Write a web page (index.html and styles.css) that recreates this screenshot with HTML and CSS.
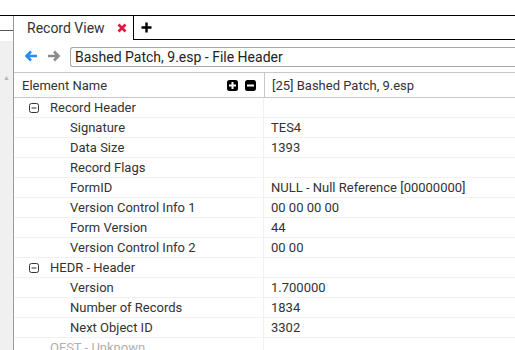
FILE: index.html
```html
<!DOCTYPE html>
<html lang="en">
<head>
    <meta charset="UTF-8">
    <title>Record View</title>
    <link rel="stylesheet" href="styles.css">
</head>
<body>
    <div class="topbar"></div>
    <div class="main">
        <div class="side">
            <div class="side-top"></div>
            <div class="side-gap"></div>
            <div class="scroll"><span class="scroll-up">&#9650;</span></div>
        </div>
        <div class="panel">
            <div class="tabs">
                <div class="tab">
                    <span class="tab-title">Record View</span>
                    <svg class="tab-close" width="10" height="10" viewBox="0 0 10 10">
                        <path d="M1.5 1.5 L8.5 8.5 M8.5 1.5 L1.5 8.5" stroke="#e3173e" stroke-width="2.6"/>
                    </svg>
                </div>
                <div class="tab-add">
                    <svg width="11" height="11" viewBox="0 0 11 11">
                        <path d="M5.5 0.5 V10.5 M0.5 5.5 H10.5" stroke="#000" stroke-width="2.4"/>
                    </svg>
                </div>
            </div>
            <div class="nav">
                <svg class="arrow" width="14" height="12" viewBox="0 0 14 12">
                    <path d="M13 6 H3 M7 1.5 L2.5 6 L7 10.5" stroke="#2b8cf0" stroke-width="2.6" fill="none"/>
                </svg>
                <svg class="arrow" width="14" height="12" viewBox="0 0 14 12">
                    <path d="M1 6 H11 M7 1.5 L11.5 6 L7 10.5" stroke="#8a8a8a" stroke-width="2.6" fill="none"/>
                </svg>
                <div class="address">Bashed Patch, 9.esp - File Header</div>
            </div>
            <div class="tree">
                <div class="row head">
                    <div class="cell name">
                        <span class="label">Element Name</span>
                        <span class="tools">
                            <svg width="11" height="11" viewBox="0 0 11 11">
                                <rect width="11" height="11" rx="2.5" fill="#000"/>
                                <path d="M5.5 2 V9 M2 5.5 H9" stroke="#fff" stroke-width="2"/>
                            </svg>
                            <svg width="11" height="11" viewBox="0 0 11 11">
                                <rect width="11" height="11" rx="2.5" fill="#000"/>
                                <path d="M2 5.5 H9" stroke="#fff" stroke-width="2"/>
                            </svg>
                        </span>
                    </div>
                    <div class="cell value">[25] Bashed Patch, 9.esp</div>
                </div>

                <div class="row">
                    <div class="cell name group">
                        <svg class="toggle" width="10" height="10" viewBox="0 0 10 10">
                            <rect x="0.5" y="0.5" width="9" height="9" rx="2" fill="none" stroke="#333"/>
                            <path d="M2.5 5 H7.5" stroke="#333"/>
                        </svg>
                        Record Header
                    </div>
                    <div class="cell value"></div>
                </div>
                <div class="row"><div class="cell name child">Signature</div><div class="cell value">TES4</div></div>
                <div class="row"><div class="cell name child">Data Size</div><div class="cell value">1393</div></div>
                <div class="row"><div class="cell name child">Record Flags</div><div class="cell value"></div></div>
                <div class="row"><div class="cell name child">FormID</div><div class="cell value">NULL - Null Reference [00000000]</div></div>
                <div class="row"><div class="cell name child">Version Control Info 1</div><div class="cell value">00 00 00 00</div></div>
                <div class="row"><div class="cell name child">Form Version</div><div class="cell value">44</div></div>
                <div class="row"><div class="cell name child">Version Control Info 2</div><div class="cell value">00 00</div></div>

                <div class="row">
                    <div class="cell name group">
                        <svg class="toggle" width="10" height="10" viewBox="0 0 10 10">
                            <rect x="0.5" y="0.5" width="9" height="9" rx="2" fill="none" stroke="#333"/>
                            <path d="M2.5 5 H7.5" stroke="#333"/>
                        </svg>
                        HEDR - Header
                    </div>
                    <div class="cell value"></div>
                </div>
                <div class="row"><div class="cell name child">Version</div><div class="cell value">1.700000</div></div>
                <div class="row"><div class="cell name child">Number of Records</div><div class="cell value">1834</div></div>
                <div class="row"><div class="cell name child">Next Object ID</div><div class="cell value">3302</div></div>
                <div class="row muted"><div class="cell name group plain">OFST - Unknown</div><div class="cell value"></div></div>
            </div>
        </div>
    </div>
</body>
</html>
```
FILE: styles.css
```css
body {
    margin: 0;
    width: 515px;
    height: 350px;
    overflow: hidden;
    background-color: #ffffff;
    font-family: Roboto, "Liberation Sans", sans-serif;
    font-size: 13px;
    color: #333333;
}

.topbar {
    height: 15px;
    border-bottom: 1px solid #000000;
}

.main {
    display: flex;
    height: 334px;
    overflow: hidden;
}

.side {
    width: 13px;
    border-right: 1px solid #9a9a9a;
    display: flex;
    flex-direction: column;
}

.side-top {
    height: 14px;
    border-bottom: 1px solid #555555;
    flex-shrink: 0;
}

.side-gap {
    height: 10px;
    flex-shrink: 0;
}

.scroll {
    flex: 1;
    background-color: #f0f0f0;
    text-align: center;
}

.scroll-up {
    display: block;
    margin-top: 33px;
    font-size: 7px;
    color: #b5b5b5;
}

.panel {
    flex: 1;
    display: flex;
    flex-direction: column;
    overflow: hidden;
}

.tabs {
    display: flex;
    height: 24px;
    flex-shrink: 0;
}

.tab {
    width: 106px;
    padding-left: 13px;
    display: flex;
    align-items: center;
    border-right: 1px solid #000000;
    font-size: 14px;
    color: #333333;
}

.tab-title {
    flex: 1;
}

.tab-close {
    margin-right: 6px;
}

.tab-add {
    flex: 1;
    display: flex;
    align-items: center;
    padding-left: 7px;
    border-bottom: 1px solid #000000;
}

.nav {
    height: 32px;
    flex-shrink: 0;
    display: flex;
    align-items: center;
    gap: 9px;
    padding-left: 10px;
    border-bottom: 1px solid #c8c8c8;
}

.address {
    flex: 1;
    height: 18px;
    line-height: 18px;
    margin-top: 1px;
    padding-left: 4px;
    border: 1px solid #a8a8a8;
    border-right: none;
    border-radius: 3px 0 0 3px;
    font-size: 14px;
    color: #222222;
    white-space: nowrap;
}

.tree {
    flex: 1;
    overflow: hidden;
}

.row {
    display: flex;
    height: 19px;
    flex-shrink: 0;
    border-bottom: 1px solid #f1f1f1;
}

.row.head {
    height: 24px;
    border-bottom: 1px solid #c8c8c8;
}

.cell {
    display: flex;
    align-items: center;
    white-space: nowrap;
}

.name {
    width: 249px;
    border-right: 1px solid #f1f1f1;
}

.head .name {
    width: 242px;
    padding-left: 8px;
    border-right: 1px solid #c8c8c8;
}

.label {
    flex: 1;
}

.tools {
    display: flex;
    gap: 7px;
    margin-right: 8px;
}

.value {
    flex: 1;
    padding-left: 7px;
}

.group {
    width: 234px;
    padding-left: 15px;
}

.toggle {
    margin-right: 11px;
}

.plain {
    padding-left: 36px;
    width: 213px;
}

.child {
    width: 193px;
    padding-left: 56px;
}

.muted {
    color: #b0b0b0;
}
```
